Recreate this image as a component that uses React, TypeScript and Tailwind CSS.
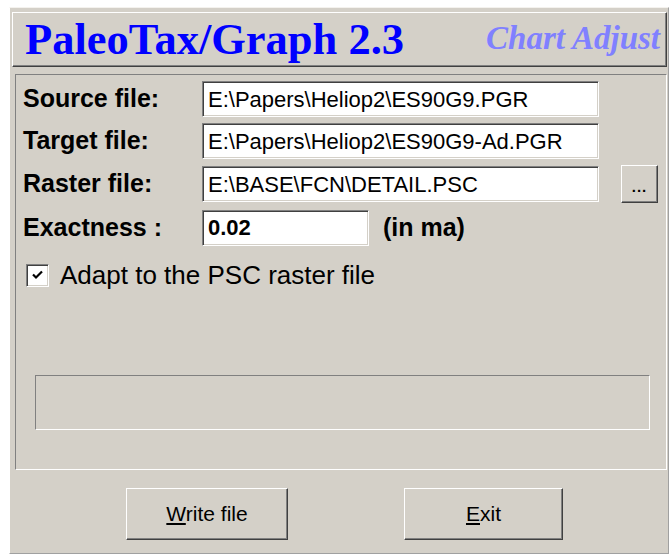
import React from 'react';

const sans = { fontFamily: '"Liberation Sans", Arial, sans-serif' };
const serif = { fontFamily: '"Liberation Serif", "Times New Roman", serif' };

// classic 3D edges
const raised =
  'border border-t-white border-l-white border-r-[#404040] border-b-[#404040] shadow-[inset_-1px_-1px_0_#808080]';
const sunken =
  'border border-t-[#808080] border-l-[#808080] border-r-white border-b-white shadow-[inset_1px_1px_0_#404040,inset_-1px_-1px_0_#d4d0c8]';

function Field({ label, value, bold, width = 'w-[397px]' }: { label: string; value: string; bold?: boolean; width?: string }) {
  return (
    <div className="flex h-[36px] items-center">
      <span className="w-[179px] text-[25px] font-bold text-black">{label}</span>
      <div className={`flex h-full ${width} items-center bg-white pl-[5px] ${sunken}`}>
        <span className={`text-[22px] text-black ${bold ? 'font-bold' : ''}`}>{value}</span>
      </div>
    </div>
  );
}

function Button({ children, className = '' }: { children: React.ReactNode; className?: string }) {
  return (
    <button className={`flex items-center justify-center bg-[#d4d0c8] text-[21px] text-black ${raised} ${className}`}>
      {children}
    </button>
  );
}

export default function App() {
  return (
    <div className="h-[554px] w-[669px] overflow-hidden bg-white pl-[9px] pt-[7px]" style={sans}>
      <div className="flex h-[547px] flex-col border-l border-t border-r border-b border-l-white border-t-[#f4f2ee] border-r-[#a0a0a0] border-b-[#a0a0a0] bg-[#d4d0c8]">
        {/* header banner */}
        <div className={`ml-[2px] mt-[4px] flex h-[55px] w-[655px] items-center justify-between pl-[12px] pr-[6px] ${raised}`}>
          <span className="text-[44.5px] font-bold leading-none text-[#0000ff]" style={serif}>
            PaleoTax/Graph 2.3
          </span>
          <span className="mb-[2px] text-[33px] font-bold italic leading-none text-[#8080ff]" style={serif}>
            Chart Adjust
          </span>
        </div>

        {/* main form */}
        <div className="ml-[5px] mt-[7px] flex h-[396px] w-[652px] flex-col border border-t-[#808080] border-l-[#808080] border-r-white border-b-white pl-[7px] pt-[6px]">
          <div className="flex flex-col gap-[6px]">
            <Field label="Source file:" value="E:\Papers\Heliop2\ES90G9.PGR" />
            <Field label="Target file:" value="E:\Papers\Heliop2\ES90G9-Ad.PGR" />
            <div className="flex items-center">
              <Field label="Raster file:" value="E:\BASE\FCN\DETAIL.PSC" />
              <Button className="ml-[22px] h-[38px] w-[37px] !text-[15px] font-bold text-[#505050]">
                <span className="mt-[6px] tracking-[1px]">...</span>
              </Button>
            </div>
            <div className="flex items-center">
              <Field label="Exactness :" value="0.02" bold width="w-[167px]" />
              <span className="ml-[14px] text-[25px] font-bold text-black">(in ma)</span>
            </div>
          </div>

          <div className="ml-[3px] mt-[17px] flex h-[23px] items-center">
            <div className={`flex h-[23px] w-[23px] items-center justify-center bg-white ${sunken}`}>
              <svg width="11" height="10" viewBox="0 0 11 10">
                <path d="M1 4.5 L4 7.5 L10 1.5" fill="none" stroke="#000" strokeWidth="2.2" />
              </svg>
            </div>
            <span className="ml-[11px] text-[26px] leading-none text-black">Adapt to the PSC raster file</span>
          </div>

          <div className="ml-[12px] mt-[88px] h-[55px] w-[615px] border border-t-[#808080] border-l-[#808080] border-r-white border-b-white" />
        </div>

        {/* actions */}
        <div className="mt-[18px] flex gap-[116px] pl-[116px]">
          <Button className="h-[52px] w-[162px]">
            <span>
              <span className="underline underline-offset-2">W</span>rite file
            </span>
          </Button>
          <Button className="h-[52px] w-[159px]">
            <span>
              <span className="underline underline-offset-2">E</span>xit
            </span>
          </Button>
        </div>
      </div>
    </div>
  );
}
